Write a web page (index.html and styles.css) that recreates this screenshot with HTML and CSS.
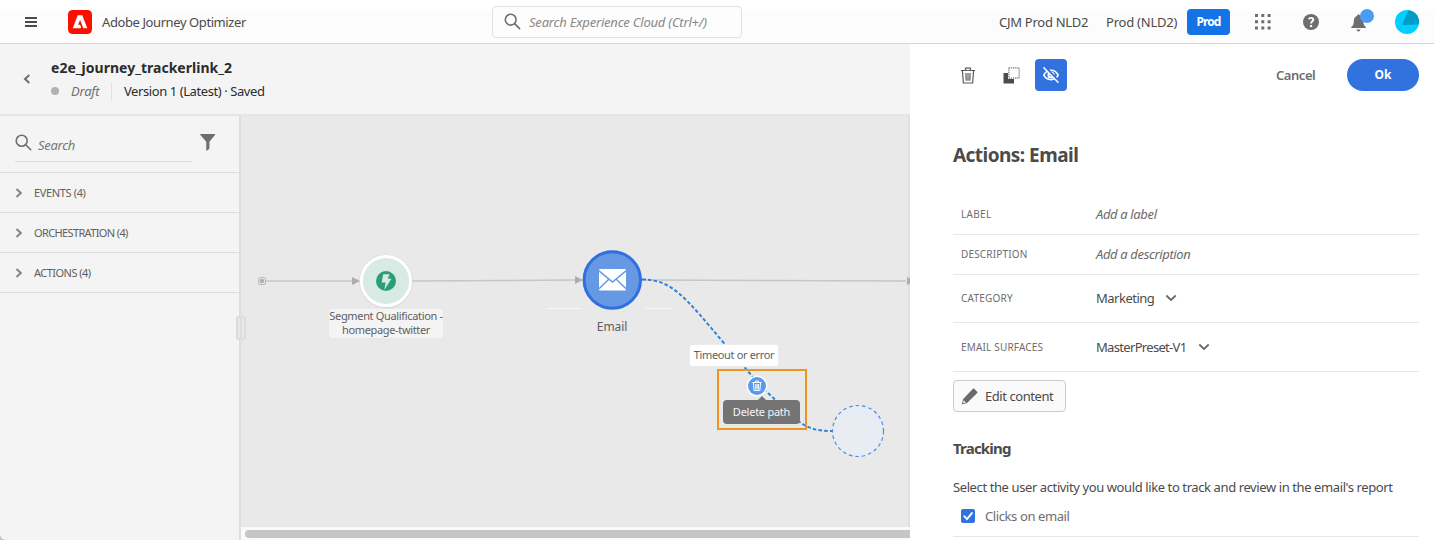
FILE: index.html
```html
<!DOCTYPE html>
<html lang="en">
<head>
<meta charset="utf-8">
<title>Adobe Journey Optimizer</title>
<link rel="stylesheet" href="styles.css">
</head>
<body>
<div class="app">
  <header class="topbar">
    <svg class="menu" width="12" height="12" viewBox="0 0 12 12" fill="#4b4b4b"><path d="M0 1h12v2H0zM0 5h12v2H0zM0 9h12v2H0z"/></svg>
    <svg class="logo" width="24" height="24" viewBox="0 0 24 24"><rect width="24" height="24" rx="4.5" fill="#fa0f00"/><path fill="#fff" d="M9.700 5.300h4.600L19.300 18.200h-3.600c-.3 0-.5-.1-.6-.4L12.200 10.300c0-.1-.3-.1-.3 0L10.100 14.800h2l.9 2.300c.2.500-.1 1.100-.6 1.100H4.700z"/></svg>
    <span class="product">Adobe Journey Optimizer</span>
    <div class="cloud-search">
      <svg width="17" height="17" viewBox="0 0 17 17" fill="none" stroke="#6e6e6e" stroke-width="1.6"><circle cx="6.700" cy="6.700" r="5.400"/><path d="M10.600 10.600l5 5" stroke-linecap="round"/></svg>
      <span>Search Experience Cloud (Ctrl+/)</span>
    </div>
    <span class="org">CJM Prod NLD2</span>
    <span class="sandbox">Prod (NLD2)</span>
    <span class="badge">Prod</span>
    <svg class="apps" width="16" height="16" viewBox="0 0 16 16" fill="#6e6e6e"><path d="M0 0h3v3H0zM6.300 0h3v3h-3zM12.600 0h3v3h-3zM0 6.300h3v3H0zM6.300 6.300h3v3h-3zM12.600 6.300h3v3h-3zM0 12.600h3v3H0zM6.300 12.600h3v3h-3zM12.600 12.600h3v3h-3z"/></svg>
    <svg class="help" width="16" height="16" viewBox="0 0 16 16"><circle cx="8" cy="8" r="8" fill="#6e6e6e"/><path d="M5.600 5.100c.7-.9 1.500-1.200 2.500-1.200 1.300 0 2.200.7 2.200 1.800 0 1.600-2.200 1.700-2.200 3.800" fill="none" stroke="#fff" stroke-width="1.900"/><circle cx="8.100" cy="12" r="1.200" fill="#fff"/></svg>
    <svg class="bell" width="25" height="24" viewBox="0 0 25 24"><path fill="#6e6e6e" d="M7.500 4.500c1 0 1.500.7 1.500 1.600 2.500.8 3.300 2.800 3.400 5.400.1 3.100.9 4.200 2.300 5.200.3.300.3 1.300-.2 1.300H.7c-.6 0-.6-1-.2-1.300 1.400-1 2.200-2.100 2.300-5.200.1-2.600.9-4.600 3.200-5.400 0-.9.5-1.600 1.500-1.600zM5.600 19.500h3.800c0 2.600-3.800 2.600-3.800 0z"/><circle cx="16" cy="6" r="7" fill="#4b9cf5"/></svg>
    <svg class="avatar" width="24" height="24" viewBox="0 0 24 24"><clipPath id="face"><circle cx="12" cy="12" r="12"/></clipPath><g clip-path="url(#face)"><path fill="#00cfff" d="M0 0h24v24H0z"/><path fill="#009cc6" d="M13.500 0H24v14.500L7 15z"/></g></svg>
  </header>

  <div class="workspace">
    <div class="editor">
      <div class="journeybar">
        <svg class="back" width="8" height="10" viewBox="0 0 8 10" fill="none" stroke="#6e6e6e" stroke-width="2"><path d="M6.300 1L2 5l4.300 4"/></svg>
        <div class="journey">
          <div class="journey-name">e2e_journey_trackerlink_2</div>
          <div class="journey-meta"><i class="dot"></i><em>Draft</em><span class="version">Version 1 (Latest) · Saved</span></div>
        </div>
      </div>
      <div class="main">
        <aside class="palette">
          <div class="finder">
            <div class="find-field">
              <svg width="17" height="17" viewBox="0 0 17 17" fill="none" stroke="#6e6e6e" stroke-width="1.600"><circle cx="6.700" cy="6.700" r="5.500"/><path d="M10.700 10.700l5 5" stroke-linecap="round"/></svg>
              <em>Search</em>
            </div>
            <svg class="funnel" width="16" height="17" viewBox="0 0 16 17" fill="#6e6e6e"><path d="M.8 0h13.800c.5 0 .7.600.4 1L9.400 7.700v7L6.300 17V7.700L.4 1C0 .6.300 0 .8 0z"/></svg>
          </div>
          <div class="group"><svg width="8" height="10" viewBox="0 0 8 10"><path d="M1.500 1l4.300 4-4.300 4"/></svg><span class="g-events">EVENTS (4)</span></div>
          <div class="group"><svg width="8" height="10" viewBox="0 0 8 10"><path d="M1.500 1l4.300 4-4.300 4"/></svg><span class="g-orch">ORCHESTRATION (4)</span></div>
          <div class="group"><svg width="8" height="10" viewBox="0 0 8 10"><path d="M1.500 1l4.300 4-4.300 4"/></svg><span class="g-act">ACTIONS (4)</span></div>
        </aside>
        <section class="stage">
          <div class="canvas">
            <svg class="graph" width="669" height="411" viewBox="241 116 669 411">
              <g fill="none" stroke="#c6c6c6" stroke-width="1.500">
                <path d="M265 281h90M412 281L576 280M641 280L906 281" />
                <rect x="258.700" y="277.700" width="6.800" height="6.800" rx="1.500" stroke="#b5b5b5" stroke-width="1"/>
              </g>
              <circle cx="262" cy="281" r="2.200" fill="#b0b0b0"/>
              <path fill="#adadad" d="M352 277l8 4-8 4zM575 276l8 4-8 4zM907 277l8 4-8 4z"/>
              <path d="M546 308.500h36M645 308.500h27" stroke="#f7f7f7"/>
              <circle cx="386" cy="281.500" r="27" fill="#d0d0d0" opacity=".5"/>
              <circle cx="386" cy="281" r="24.600" fill="#d7ebe4" stroke="#fff" stroke-width="3"/>
              <circle cx="386" cy="281" r="10" fill="#2d9d78"/>
              <path fill="#d7ebe4" d="M383.300 274.300h6.200l-1.700 4.500h3.600l-7.100 11.200 1.300-7.500h-4z"/>
              <circle cx="612.300" cy="280" r="28.200" fill="#6698e4" stroke="#2f6fde" stroke-width="3"/>
              <rect x="599" y="269" width="27" height="21.500" rx="1.200" fill="#fff"/>
              <path d="M599 270.800l13.500 11.200 13.500-11.200M599 288.700l9.500-9.200M626 288.700l-9.500-9.200" fill="none" stroke="#6698e4" stroke-width="1.500"/>
              <path d="M642 279.600c30-1 45 20 82 63.500C750 373 756 382 768 393C795 418 802 431.500 832 431" fill="none" stroke="#2f84d8" stroke-width="2" stroke-dasharray="3.600 2.200"/>
              <path d="M642 279.600h4" stroke="#666"/>
              <circle cx="858" cy="431" r="25.500" fill="#e7edf3" stroke="#4b8bea" stroke-width="1.200" stroke-dasharray="3.500 3"/>
              <circle cx="757" cy="386" r="10.500" fill="#fff"/><circle cx="757" cy="386" r="9" fill="#5a9aee"/>
              <path d="M752.500 382.500h9M755.500 382.500v-1.500h3v1.500M753.500 383l.6 7.500h5.800l.6-7.500M755.800 384v5.500M757.100 384v5.500M758.400 384v5.500" fill="none" stroke="#fff" stroke-width="1"/>
            </svg>
            <div class="label segment"><span>Segment Qualification -</span><span>homepage-twitter</span></div>
            <div class="label mail">Email</div>
            <div class="label timeout">Timeout or error</div>
            <div class="marker"></div>
            <div class="tooltip">Delete path</div>
          </div>
          <div class="scroll"><div class="thumb"></div></div>
        </section>
        <div class="grip"></div>
      </div>
    </div>

    <aside class="panel">
      <div class="tools">
        <svg class="trash" width="16" height="17" viewBox="0 0 16 17" fill="none" stroke="#5a5a5a" stroke-width="1.200"><path d="M.8 3.500h14.400M5.500 3.300V1.200h5v2.100M2.400 3.700l1 12.300h9.200l1-12.300M5.900 6l.3 7.700M8 6v7.700M10.100 6l-.3 7.700"/></svg>
        <svg class="copy" width="17" height="17" viewBox="0 0 17 17"><path fill="#4b4b4b" d="M.5 6H5v6h6v4.500H1c-.3 0-.5-.2-.5-.5z"/><rect x="5.900" y=".9" width="10.200" height="10.200" fill="none" stroke="#5a5a5a" stroke-dasharray="1.300 .8"/></svg>
        <div class="toggle"><svg width="18" height="18" viewBox="0 0 18 18" fill="none" stroke="#fff"><path stroke-width="1.600" d="M1.800 9.200C3.300 6.300 5.800 4.300 9 4.300s5.700 2 7.200 4.900C14.700 12 12.200 13.700 9 13.700s-5.700-1.700-7.200-4.500z"/><circle cx="9" cy="9" r="2.600" stroke-width="2"/><path stroke="#3272df" stroke-width="2.800" d="M2.800.8l14 15"/><path stroke-width="1.500" stroke-linecap="round" d="M1.800 1.800l14.200 14.500"/></svg></div>
        <span class="cancel">Cancel</span>
        <span class="ok">Ok</span>
      </div>
      <h1 class="title">Actions: Email</h1>
      <div class="field"><span class="key k-label">LABEL</span><em>Add a label</em></div>
      <div class="field"><span class="key k-desc">DESCRIPTION</span><em>Add a description</em></div>
      <div class="field tall"><span class="key k-cat">CATEGORY</span><span class="v-cat">Marketing</span><svg width="12" height="8" viewBox="0 0 12 8"><path d="M1.300 1.500L6 6l4.700-4.500"/></svg></div>
      <div class="field tall surfaces"><span class="key k-surf">EMAIL SURFACES</span><span class="v-surf">MasterPreset-V1</span><svg width="12" height="8" viewBox="0 0 12 8"><path d="M1.300 1.500L6 6l4.700-4.500"/></svg></div>
      <div class="edit"><svg width="17" height="17" viewBox="0 0 17 17"><path fill="#6a6a6a" d="M12 .7c.4-.4.800-.4 1.200 0l3 3c.4.400.4.800 0 1.200L6 15l-5.300 1.500L2.200 11z"/><path fill="#fafafa" d="M2.700 12.300l2.100 2.100-2.800.8z"/></svg><span>Edit content</span></div>
      <h2 class="tracking">Tracking</h2>
      <p class="hint">Select the user activity you would like to track and review in the email's report</p>
      <div class="check"><svg width="14" height="14" viewBox="0 0 14 14"><rect width="14" height="14" rx="2" fill="#3272df"/><path d="M3.200 7.200l2.800 2.900 4.900-6" fill="none" stroke="#fff" stroke-width="1.900" stroke-linecap="round"/></svg><span>Clicks on email</span></div>
    </aside>
  </div>
</div>
</body>
</html>
```
FILE: styles.css
```css
* { box-sizing: border-box; }
body { margin: 0; background: #c4c4c4; }
.app {
  width: 1434px; height: 540px; overflow: hidden; display: flex; flex-direction: column;
  border-bottom-left-radius: 6px; background: #f4f4f4; color: #4b4b4b;
  font: 13px/18px "Noto Sans", "Open Sans", sans-serif; white-space: nowrap;
}
svg { flex: none; display: block; }

.topbar { height: 44px; flex: none; display: flex; align-items: center; background: linear-gradient(#fff 11px, #fcfcfc 12px); border-bottom: 1px solid #d5d5d5; }
.menu { margin-left: 25px; }
.logo { margin-left: 31px; }
.product { margin-left: 10px; width: 390px; letter-spacing: -.41px; }
.cloud-search { width: 250px; height: 32px; display: flex; align-items: center; gap: 8px; padding-left: 11px; border: 1px solid #e1e1e1; border-radius: 4px; background: #fdfdfd; color: #888; font-style: italic; }
.cloud-search span { letter-spacing: -.2px; }
.org { margin-left: 257px; width: 107px; letter-spacing: -.27px; }
.sandbox { width: 81px; letter-spacing: -.22px; }
.badge { width: 43px; height: 26px; border-radius: 4px; background: #1473e6; color: #fff; font-size: 12px; font-weight: 700; line-height: 26px; text-align: center; letter-spacing: -.9px; }
.apps { margin-left: 25px; }
.help { margin-left: 32px; }
.bell { margin-left: 32px; overflow: visible; }
.avatar { margin-left: 19px; }

.workspace { flex: 1; display: flex; min-height: 0; }
.editor { width: 910px; display: flex; flex-direction: column; }
.journeybar { height: 72px; flex: none; display: flex; border-bottom: 2px solid #e6e6e6; }
.back { margin: 30px 0 0 23px; }
.journey { margin: 15px 0 0 20px; }
.journey-name { color: #2c2c2c; font-size: 14px; font-weight: 700; letter-spacing: .02px; height: 24px; }
.journey-meta { display: flex; align-items: center; height: 18px; margin-top: -1px; }
.dot { width: 8px; height: 8px; border-radius: 50%; background: #b1b1b1; }
.journey-meta em { margin-left: 12px; width: 40px; color: #6e6e6e; letter-spacing: -.2px; }
.version { border-left: 1px solid #e1e1e1; padding-left: 12px; color: #2c2c2c; letter-spacing: -.42px; }

.main { flex: 1; display: flex; position: relative; min-height: 0; }
.palette { width: 241px; border-right: 2px solid #dedede; color: #5f5f5f; }
.finder { height: 57px; display: flex; border-bottom: 1px solid #dedede; padding-left: 15px; }
.find-field { width: 177px; height: 46px; display: flex; gap: 6px; border-bottom: 1px solid #dedede; padding-top: 18px; }
.find-field em { color: #777; padding-top: 2px; letter-spacing: -.3px; }
.funnel { margin: 18px 0 0 8px; }
.group { height: 40px; display: flex; align-items: center; gap: 11px; padding-left: 15px; border-bottom: 1px solid #dedede; font-size: 11px; }
.group path { fill: none; stroke: #858585; stroke-width: 2; }
.g-events { letter-spacing: -.36px; }
.g-orch { letter-spacing: -.63px; }
.g-act { letter-spacing: -.53px; }
.stage { width: 669px; display: flex; flex-direction: column; }
.canvas { flex: 1; position: relative; background: #e9e9e9; overflow: hidden; box-shadow: inset -3px 0 3px -2px #d8d8d8; }
.scroll { height: 13px; background: #fafafa; padding: 3px 0 0 4px; }
.thumb { height: 8px; border-radius: 4px 0 0 4px; background: #c6c6c6; }
.grip { position: absolute; left: 236px; top: 200px; width: 10px; height: 24px; border: 2px solid #dcdcdc; border-radius: 2px; background: linear-gradient(90deg, #e9e9e9 2px, #dcdcdc 2px 4px, #e9e9e9 4px); }

/* nodes on the free canvas */
.label { position: absolute; display: flex; align-items: center; justify-content: center; font-size: 11px; color: #5f5f5f; letter-spacing: -.34px; }
.segment { left: 88px; top: 193px; width: 114px; height: 29px; padding-bottom: 2px; flex-direction: column; border-radius: 3px; background: #f4f4f4; line-height: 14px; }
.mail { left: 351px; top: 201px; width: 40px; height: 20px; font-size: 12px; letter-spacing: -.1px; }
.timeout { left: 448px; top: 228px; width: 90px; height: 23px; padding-bottom: 2px; background: #fff; border: 1px solid #ececec; border-radius: 3px; }
.marker { position: absolute; left: 476px; top: 253px; width: 90px; height: 61px; border: 2px solid #f29423; }
.tooltip { position: absolute; left: 482px; top: 284px; width: 77px; height: 24px; border-radius: 4px; background: #747474; color: #f5f5f5; font-size: 11px; line-height: 24px; text-align: center; letter-spacing: -.25px; }
.tooltip::before { content: ""; position: absolute; left: 35px; top: -4px; border: 4px solid transparent; border-top: 0; border-bottom-color: #747474; }

.panel { width: 524px; background: #fff; padding-left: 43px; }
.tools { height: 62px; display: flex; align-items: center; padding-left: 7px; }
.copy { margin-left: 27px; }
.toggle { margin-left: 15px; width: 32px; height: 32px; border-radius: 4px; background: #3272df; display: flex; align-items: center; justify-content: center; }
.cancel { margin-left: 209px; width: 71px; font-weight: 600; color: #6e6e6e; letter-spacing: -.45px; padding-bottom: 1px; }
.ok { width: 72px; height: 32px; border-radius: 16px; background: #3272df; color: #fff; font-size: 12px; font-weight: 700; line-height: 31px; text-align: center; }
.title { margin: 34px 0 25px; font-size: 19px; line-height: 30px; font-weight: 700; letter-spacing: -.54px; }
.field { width: 466px; height: 40px; display: flex; align-items: center; padding: 0 0 2px 8px; border-bottom: 1px solid #e6e6e6; }
.field.tall { height: 48px; padding-bottom: 1px; }
.field.surfaces { height: 49px; }
.key { width: 135px; font-size: 10px; color: #6e6e6e; letter-spacing: .3px; }
.k-desc, .k-surf { letter-spacing: .17px; }
.k-cat { letter-spacing: .22px; }
.field em { color: #6a6a6a; letter-spacing: -.36px; }
.v-cat { letter-spacing: -.5px; }
.v-surf { letter-spacing: -.68px; }
.field svg { margin-left: 11px; }
.field path { fill: none; stroke: #6a6a6a; stroke-width: 1.8; }
.edit { width: 113px; height: 32px; margin-top: 8px; display: flex; align-items: center; gap: 7px; padding-left: 7px; background: #fafafa; border: 1px solid #cacaca; border-radius: 4px; letter-spacing: -.43px; }
.tracking { margin: 25px 0 0; font-size: 15px; line-height: 22px; font-weight: 700; letter-spacing: -.8px; }
.hint { margin: 19px 0 0; letter-spacing: -.4px; }
.check { width: 466px; height: 41px; display: flex; align-items: center; gap: 10px; padding-left: 8px; border-bottom: 1px solid #e6e6e6; color: #6e6e6e; letter-spacing: -.4px; }
```
